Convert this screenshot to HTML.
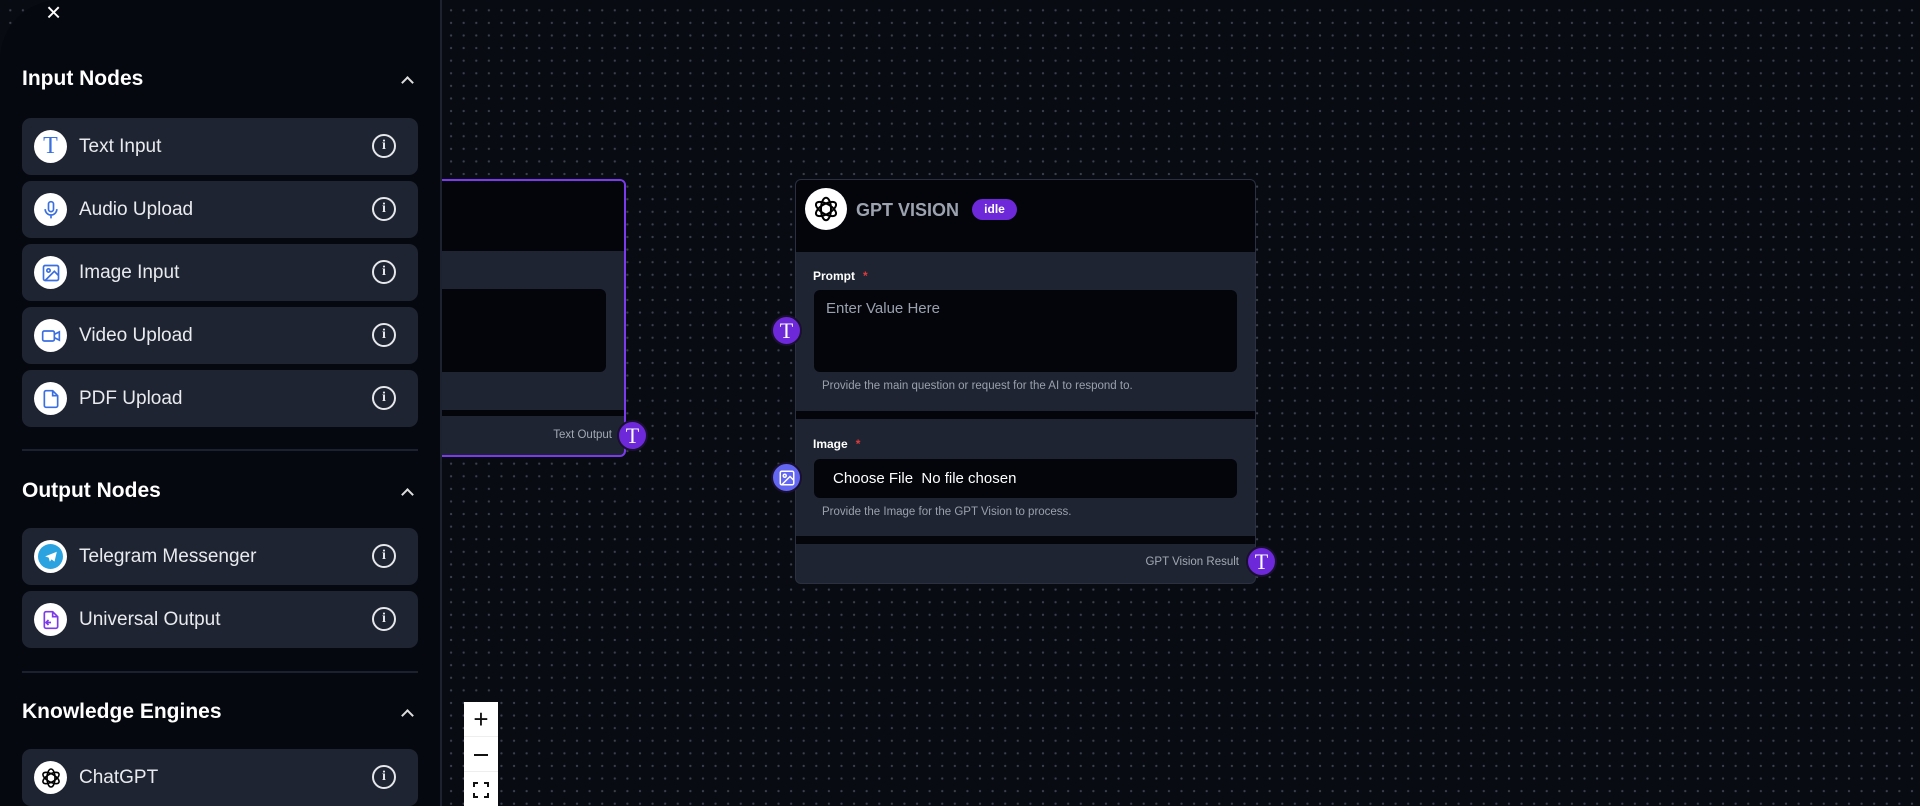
<!DOCTYPE html>
<html><head><meta charset="utf-8"><style>
*{box-sizing:border-box;margin:0;padding:0}
body{width:1920px;height:806px;overflow:hidden;background:#07090f;font-family:"Liberation Sans",sans-serif;position:relative}
.canvas{position:absolute;inset:0;background-color:#080b12;background-image:radial-gradient(circle,#3b404c 1px,transparent 1.3px);background-size:12.6px 12.6px;background-position:4px 4px}
.side{position:absolute;left:0;top:0;width:442px;height:806px;background:#060810;border-right:2px solid #1c2230;border-top-left-radius:60px;overflow:hidden}
.x{position:absolute;left:46px;top:0px;color:#fff;font-size:26px;line-height:24px}
.h{position:absolute;left:22px;color:#fff;font-weight:bold;font-size:21px}
.chev{position:absolute;left:403px;width:9px;height:9px;border-left:2px solid #ddd;border-top:2px solid #ddd;transform:rotate(45deg)}
.item{position:absolute;left:22px;width:396px;height:57px;background:#1e2431;border-radius:9px}
.item .ic{position:absolute;left:12px;top:12px;width:33px;height:33px;border-radius:50%;background:#fff;display:flex;align-items:center;justify-content:center}
.item .t{position:absolute;left:57px;top:18px;color:#e8eaee;font-size:19px}
.item .inf{position:absolute;left:350px;top:16px;width:24px;height:24px;border:2px solid #e5e7eb;border-radius:50%;color:#e5e7eb;font-size:14px;font-weight:bold;text-align:center;line-height:20px;font-family:"Liberation Serif",serif}
.sep{position:absolute;left:22px;width:396px;height:2px;background:#1b2130}
.node{position:absolute;background:#1e2431;border-radius:6px;overflow:hidden}
.hd{position:absolute;left:0;right:0;top:0;height:72px;background:#03050b}
.lbl{position:absolute;color:#fff;font-size:12px;font-weight:bold}
.lbl span{color:#e23b3b;margin-left:8px}
.ta{position:absolute;background:#03050b;border-radius:6px}
.help{position:absolute;color:#9aa1ad;font-size:11.5px}
.gap{position:absolute;left:0;right:0;height:8px;background:#03050b}
.hand{position:absolute;width:31px;height:31px;border-radius:50%;background:#6d28d9;border:2px solid #1a1030;display:flex;align-items:center;justify-content:center;color:#fff;font-family:"Liberation Serif",serif;font-size:22px}
</style></head><body>
<div class="canvas"></div>

<div class="node" style="left:380px;top:179px;width:246px;height:278px;border:2px solid #7c3aed;background:#1e2431">
 <div class="hd" style="height:70px"></div>
 <div class="ta" style="left:-10px;top:108px;width:234px;height:83px"></div>
 <div class="gap" style="top:229px;height:6px"></div>
 <div class="help" style="right:12px;top:248px;color:#a3a9b4">Text Output</div>
</div>
<div class="hand" style="left:617px;top:420px">T</div>

<div class="node" style="left:795px;top:179px;width:461px;height:405px;border:1px solid #2a3040">
 <div class="hd"></div>
 <div style="position:absolute;left:9px;top:8px;width:42px;height:42px;border-radius:50%;background:#fff;display:flex;align-items:center;justify-content:center">
  <svg width="30" height="30" viewBox="0 0 24 24" fill="none" stroke="#000" stroke-width="1.6"><g><ellipse cx="12" cy="12" rx="4" ry="9"/><ellipse cx="12" cy="12" rx="4" ry="9" transform="rotate(60 12 12)"/><ellipse cx="12" cy="12" rx="4" ry="9" transform="rotate(120 12 12)"/></g></svg>
 </div>
 <div style="position:absolute;left:60px;top:20px;color:#9ca3af;font-weight:bold;font-size:18px">GPT VISION</div>
 <div style="position:absolute;left:176px;top:19px;width:45px;height:21px;border-radius:11px;background:#6d28d9;color:#fff;font-size:12px;font-weight:bold;text-align:center;line-height:21px">idle</div>
 <div class="lbl" style="left:17px;top:89px">Prompt<span>*</span></div>
 <div class="ta" style="left:18px;top:110px;width:423px;height:82px"><div style="position:absolute;left:12px;top:10px;color:#9aa1ad;font-size:15px">Enter Value Here</div></div>
 <div class="help" style="left:26px;top:200px">Provide the main question or request for the AI to respond to.</div>
 <div class="gap" style="top:231px"></div>
 <div class="lbl" style="left:17px;top:257px">Image<span>*</span></div>
 <div class="ta" style="left:18px;top:279px;width:423px;height:39px"><div style="position:absolute;left:19px;top:11px;color:#fff;font-size:15px">Choose File &nbsp;No file chosen</div></div>
 <div class="help" style="left:26px;top:326px">Provide the Image for the GPT Vision to process.</div>
 <div class="gap" style="top:356px"></div>
 <div class="help" style="right:16px;top:376px;color:#a3a9b4">GPT Vision Result</div>
</div>
<div class="hand" style="left:771px;top:315px">T</div>
<div class="hand" style="left:771px;top:462px;background:#6366f1"><svg width="18" height="18" viewBox="0 0 24 24" fill="none" stroke="#fff" stroke-width="2"><rect x="3" y="3" width="18" height="18" rx="2"/><circle cx="9" cy="9" r="2"/><path d="M21 15l-5-5L5 21"/></svg></div>
<div class="hand" style="left:1246px;top:546px">T</div>

<div style="position:absolute;left:464px;top:702px;width:34px;height:104px;background:#fff">
 <div style="height:35px;border-bottom:1px solid #eee;text-align:center;font-size:26px;line-height:35px;color:#111">+</div>
 <div style="height:35px;border-bottom:1px solid #eee;position:relative"><div style="position:absolute;left:10px;top:17px;width:14px;height:2px;background:#111"></div></div>
 <svg style="position:absolute;left:9px;top:80px" width="16" height="16" viewBox="0 0 16 16" fill="none" stroke="#111" stroke-width="2"><path d="M1 5V1h4M11 1h4v4M15 11v4h-4M5 15H1v-4"/></svg>
</div>

<div class="side">
 <div class="x">×</div>
 <div class="h" style="top:67px">Input Nodes</div><div class="chev" style="top:78px"></div>
 <div class="item" style="top:118px"><div class="ic" style="color:#3b6fe0;font-family:'Liberation Serif',serif;font-size:24px">T</div><div class="t">Text Input</div><div class="inf">i</div></div>
 <div class="item" style="top:181px"><div class="ic"><svg width="20" height="20" viewBox="0 0 24 24" fill="none" stroke="#3b6fe0" stroke-width="2"><rect x="9" y="2" width="6" height="12" rx="3"/><path d="M5 11a7 7 0 0 0 14 0M12 18v4"/></svg></div><div class="t">Audio Upload</div><div class="inf">i</div></div>
 <div class="item" style="top:244px"><div class="ic"><svg width="20" height="20" viewBox="0 0 24 24" fill="none" stroke="#3b6fe0" stroke-width="2"><rect x="3" y="3" width="18" height="18" rx="2"/><circle cx="9" cy="9" r="2"/><path d="M21 15l-5-5L5 21"/></svg></div><div class="t">Image Input</div><div class="inf">i</div></div>
 <div class="item" style="top:307px"><div class="ic"><svg width="20" height="20" viewBox="0 0 24 24" fill="none" stroke="#3b6fe0" stroke-width="2"><rect x="2" y="6" width="14" height="12" rx="2"/><path d="M16 10l6-3v10l-6-3"/></svg></div><div class="t">Video Upload</div><div class="inf">i</div></div>
 <div class="item" style="top:370px"><div class="ic"><svg width="20" height="20" viewBox="0 0 24 24" fill="none" stroke="#3b6fe0" stroke-width="2"><path d="M14 2H6a2 2 0 0 0-2 2v16a2 2 0 0 0 2 2h12a2 2 0 0 0 2-2V8z"/><path d="M14 2v6h6"/></svg></div><div class="t">PDF Upload</div><div class="inf">i</div></div>
 <div class="sep" style="top:449px"></div>
 <div class="h" style="top:479px">Output Nodes</div><div class="chev" style="top:490px"></div>
 <div class="item" style="top:528px"><div class="ic"><div style="width:25px;height:25px;border-radius:50%;background:#2aa3e0;display:flex;align-items:center;justify-content:center"><svg width="14" height="14" viewBox="0 0 24 24"><path d="M22 3L2 11l6 2 2 7 3-4 5 4z" fill="#fff"/></svg></div></div><div class="t">Telegram Messenger</div><div class="inf">i</div></div>
 <div class="item" style="top:591px"><div class="ic"><svg width="20" height="20" viewBox="0 0 24 24" fill="none" stroke="#7c3aed" stroke-width="2"><path d="M14 2H6a2 2 0 0 0-2 2v16a2 2 0 0 0 2 2h12a2 2 0 0 0 2-2V8z"/><path d="M14 2v6h6M12 15H6m3-3l-3 3 3 3"/></svg></div><div class="t">Universal Output</div><div class="inf">i</div></div>
 <div class="sep" style="top:671px"></div>
 <div class="h" style="top:700px">Knowledge Engines</div><div class="chev" style="top:711px"></div>
 <div class="item" style="top:749px"><div class="ic"><svg width="24" height="24" viewBox="0 0 24 24" fill="none" stroke="#000" stroke-width="1.6"><ellipse cx="12" cy="12" rx="4" ry="9"/><ellipse cx="12" cy="12" rx="4" ry="9" transform="rotate(60 12 12)"/><ellipse cx="12" cy="12" rx="4" ry="9" transform="rotate(120 12 12)"/></svg></div><div class="t">ChatGPT</div><div class="inf">i</div></div>
</div>
</body></html>
